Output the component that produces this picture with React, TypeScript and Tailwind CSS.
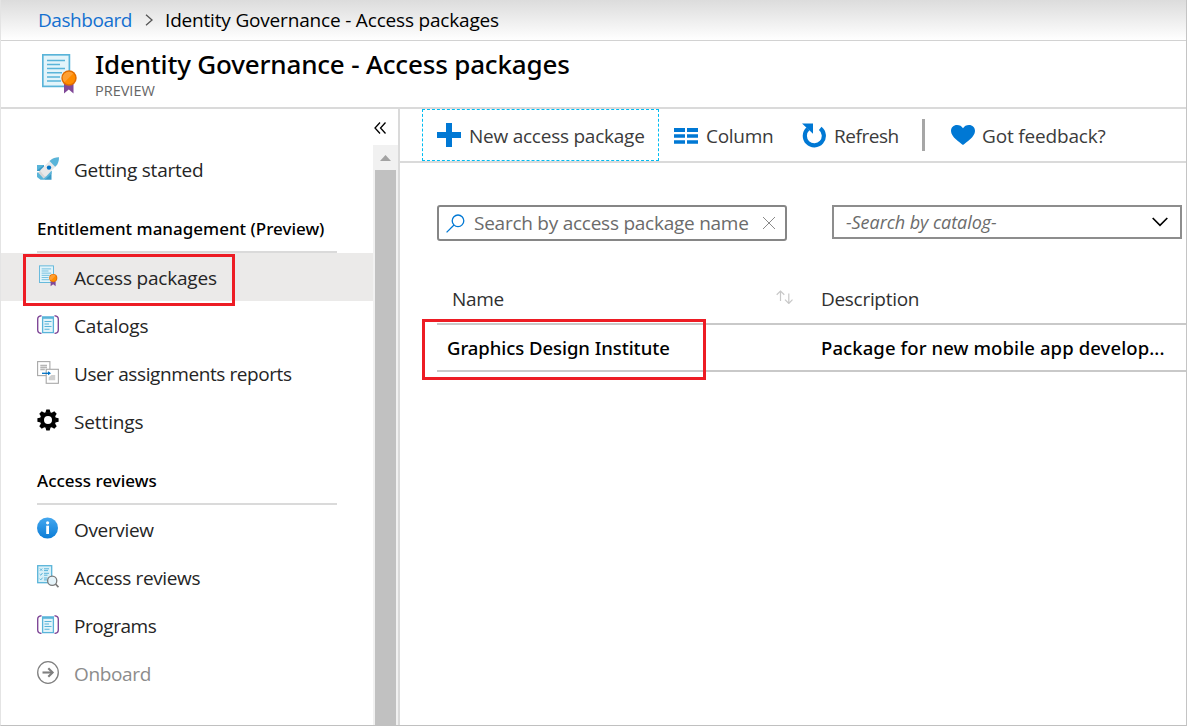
import type { ReactNode } from "react";

function PackageIcon({ className }: { className: string }) {
  return (
    <svg viewBox="0 0 36 40" className={className}>
      <rect x="0.8" y="0.8" width="26.6" height="31.6" fill="#e3f4fa" stroke="#59b4d9" strokeWidth="1.7" />
      <path d="M5 6.5h18M5 10.5h13M5 14.6h18M5 18.8h15M5 22.9h13M5 27h14" stroke="#59b4d9" strokeWidth="1.5" />
      <path d="M22 30h9.5v9.6l-4.7-4-4.8 4z" fill="#804998" />
      <circle cx="27" cy="24" r="7.7" fill="#e06c00" />
      <circle cx="27" cy="24" r="6.2" fill="#ff8c00" />
      <path d="M22.5 28.3a6.2 6.2 0 0 1 8.8-8.8z" fill="#ffa033" />
    </svg>
  );
}

function RocketIcon() {
  return (
    <svg viewBox="0 0 22 23" className="h-[23px] w-[22px]">
      <path d="M0 8h7v6H0zM8 22.8h6.500V14H8z" fill="#3999c6" />
      <path d="M0 8h7l-7 5.500zM8 22.800l6.500-6V14H8z" fill="#59b4d9" />
      <path d="M0 15.500h4l4 4.500v2.800H3.500L0 20z" fill="#59b4d9" />
      <path d="M22 .2l-7.200 1.600L3 13.600 8.600 20 20.400 7.600z" fill="#e8e8e8" />
      <path d="M22 .2c-3.500 0-6.500.6-9.500 3.900l5.700 5.700C21.300 7 22 3.800 22 .2z" fill="#59b4d9" />
      <path d="M3 13.600L8.600 20l-2 1.500-5.300-5.800z" fill="#d6d6d6" />
      <circle cx="12" cy="10.600" r="2.200" fill="#0072c6" />
    </svg>
  );
}

function CatalogIcon() {
  return (
    <svg viewBox="0 0 22 19" className="h-[19px] w-[22px]">
      <path d="M4.5.7C2.3.9.7 2 .7 4v11c0 2 1.600 3.200 3.800 3.400M17.500.7c2.200.2 3.800 1.300 3.800 3.300v11c0 2-1.600 3.200-3.800 3.400" fill="none" stroke="#804998" strokeWidth="1.4" />
      <rect x="5.600" y="2.200" width="10.800" height="15.400" fill="#e3f4fa" stroke="#59b4d9" strokeWidth="1.300" />
      <path d="M5 1.400h12v2.400H5z" fill="#59b4d9" />
      <path d="M7.500 6.500h7M7.500 9h4.500M7.500 11.500h7M7.500 14.300h5" stroke="#59b4d9" strokeWidth="1.100" />
    </svg>
  );
}

function ReportsIcon() {
  return (
    <svg viewBox="0 0 22 24" className="h-[24px] w-[22px]">
      <rect x=".6" y="1.600" width="12.300" height="14" fill="#fff" stroke="#a8a8a8" strokeWidth="1.100" />
      <path d="M3.300 5.500h6.700M3.300 7.500h6.700M3.300 9.500h4.500" stroke="#b5b5b5" strokeWidth="1.400" />
      <rect x="9.200" y="9.300" width="12.200" height="14" fill="#fff" stroke="#a8a8a8" strokeWidth="1.100" />
      <path d="M14.500 15h3.700v5.300h-6.500v-3z" fill="#d0d0d0" />
      <path d="M5 13.300h8" stroke="#0072c6" strokeWidth="1.300" />
      <path d="M11 11.300l3 2-3 2z" fill="#0072c6" />
    </svg>
  );
}

function GearIcon() {
  const angles = [0, 45, 90, 135, 180, 225, 270, 315];
  return (
    <svg viewBox="-11 -11 22 22" className="size-[22px]">
      {angles.map((a) => (
        <path key={a} transform={`rotate(${a})`} d="M-2.6-7.2L-1.7-10.6h3.400L2.600-7.200z" fill="#000" />
      ))}
      <circle r="6" fill="none" stroke="#000" strokeWidth="4" />
    </svg>
  );
}

function InfoIcon() {
  return (
    <svg viewBox="0 0 22 22" className="size-[22px]">
      <defs>
        <linearGradient id="info" x1="0" y1="0" x2="0" y2="1">
          <stop offset="0" stopColor="#45a8ef" />
          <stop offset="1" stopColor="#0b7cd6" />
        </linearGradient>
      </defs>
      <circle cx="10.500" cy="11" r="10.500" fill="url(#info)" />
      <path d="M9.200 8.700h2.800v8.300H9.200z" fill="#fff" />
      <circle cx="10.600" cy="5.800" r="1.600" fill="#fff" />
    </svg>
  );
}

function ReviewIcon() {
  return (
    <svg viewBox="0 0 22 23" className="h-[23px] w-[22px]">
      <rect x=".7" y=".7" width="14" height="17" fill="#d9f0f8" stroke="#59b4d9" strokeWidth="1.300" />
      <path d="M7 3.800h5M7 5.600h4M7 8.300h5M7 10.200h3.500M7 13h3.500M7 14.900h3M3 3.500l2.200 2.200M5.200 3.500L3 5.700M2.600 9l1.200 1.200L5.500 8M2.600 13.700l1.200 1.200 1.700-2.200" fill="none" stroke="#59b4d9" strokeWidth="1" />
      <circle cx="15.200" cy="15.700" r="4.600" fill="#e6f4fa" stroke="#7a7a7a" strokeWidth="1.300" />
      <path d="M18.500 19l3 3.200" stroke="#7a7a7a" strokeWidth="1.800" />
    </svg>
  );
}

function OnboardIcon() {
  return (
    <svg viewBox="0 0 22 23" className="h-[23px] w-[22px]" fill="none" stroke="#7f7f7f">
      <ellipse cx="11" cy="11.500" rx="10.300" ry="10.800" strokeWidth="1.300" />
      <path d="M5.500 11.500h10" strokeWidth="2.100" />
      <path d="M11.300 7.300l4.300 4.200-4.300 4.200" strokeWidth="2.100" />
    </svg>
  );
}

function NavItem({ icon, label, className = "" }: { icon: ReactNode; label: string; className?: string }) {
  return (
    <div className="flex h-12 items-center pt-[2px] pl-9">
      <div className="mb-1 flex w-[37px] items-center">{icon}</div>
      <span className={`text-[19px] leading-none ${className}`}>{label}</span>
    </div>
  );
}

function GroupHeading({ children }: { children: ReactNode }) {
  return (
    <div className="mr-9 ml-9 flex h-[60px] items-end border-b-2 border-[#dadada] pb-[13px] font-['Noto_Sans',sans-serif] text-[17px] leading-[18px] font-medium text-black">
      {children}
    </div>
  );
}

function Sidebar() {
  return (
    <aside className="flex w-[399px] shrink-0 border-r-2 border-[#dadada]">
      <nav className="w-[372px] shrink-0 pt-[36px] text-[#252525]">
        <NavItem icon={<RocketIcon />} label="Getting started" className="tracking-[-0.24px]" />
        <GroupHeading>Entitlement management (Preview)</GroupHeading>
        <div className="relative bg-[#ebeae9]">
          <NavItem icon={<PackageIcon className="ml-[2px] h-[22px] w-[19px]" />} label="Access packages" className="tracking-[-0.2px]" />
          <div className="absolute top-px left-[22px] h-[52px] w-[212px] border-3 border-[#ed1c24]" />
        </div>
        <NavItem icon={<CatalogIcon />} label="Catalogs" className="tracking-[-0.12px]" />
        <NavItem icon={<ReportsIcon />} label="User assignments reports" className="tracking-[-0.41px]" />
        <NavItem icon={<GearIcon />} label="Settings" className="tracking-[-0.12px]" />
        <GroupHeading>Access reviews</GroupHeading>
        <NavItem icon={<InfoIcon />} label="Overview" className="tracking-[-0.35px]" />
        <NavItem icon={<ReviewIcon />} label="Access reviews" className="tracking-[-0.35px]" />
        <NavItem icon={<CatalogIcon />} label="Programs" className="tracking-[-0.45px]" />
        <NavItem icon={<OnboardIcon />} label="Onboard" className="tracking-[-0.35px] text-[#8c8c8c]" />
      </nav>
      <div className="flex flex-1 flex-col">
        <button className="flex h-9 items-center" aria-label="Collapse">
          <svg viewBox="0 0 12 12" className="mt-px ml-px size-3" fill="none" stroke="#000" strokeWidth="1.300">
            <path d="M6 .5L1 6l5 5.500M11.500.5l-5 5.500 5 5.500" />
          </svg>
        </button>
        <div className="flex flex-1 flex-col bg-[#f1f1f1] px-[2px]">
          <svg viewBox="0 0 21 25" className="h-[25px] w-[21px]">
            <path d="M5 16l5.500-6 5.500 6z" fill="#a3a3a3" />
          </svg>
          <div className="w-[21px] flex-1 bg-[#c1c1c1]" />
        </div>
      </div>
    </aside>
  );
}

function Toolbar() {
  return (
    <div className="flex h-[54px] items-start border-b-2 border-[#dadada] pl-[22px] text-[19px] leading-none text-[#3b3b3b]">
      <div className="flex h-[52px] w-[237px] items-center border border-dashed border-[#00bcf2] pl-[14px]">
        <svg viewBox="0 0 24 24" className="size-6 shrink-0">
          <path d="M9 0h6v9h9v6h-9v9H9v-9H0V9h9z" fill="#0078d4" />
        </svg>
        <span className="ml-[8px] pt-[2px] tracking-[-0.24px] whitespace-nowrap">New access package</span>
      </div>
      <div className="flex h-[52px] items-center pl-[15px]">
        <svg viewBox="0 0 24 16" className="mt-px h-4 w-6">
          <path d="M0 0h11v4H0zM13 0h11v4H13zM0 6.300h11v3.500H0zM13 6.300h11v3.500H13zM0 12.200h11v3.500H0zM13 12.200h11v3.500H13z" fill="#0078d4" />
        </svg>
        <span className="ml-[8px] w-[96px] pt-[2px] tracking-[-0.3px]">Column</span>
        <svg viewBox="0 0 24 25" className="h-[25px] w-6">
          <path d="M6 5.800A9.500 9.500 0 1 0 18.200 5.400" fill="none" stroke="#0078d4" strokeWidth="4.200" />
          <path d="M0 .5h11v10.300z" fill="#0078d4" />
        </svg>
        <span className="ml-[8px] w-[88px] pt-[2px] tracking-[-0.45px]">Refresh</span>
        <div className="h-8 w-[3px] bg-[#a6a6a6]" />
        <svg viewBox="0 0 24 20" className="ml-[26px] h-5 w-6">
          <path d="M12 20C9 17.500 0 12 0 6 0 2.500 2.500 0 6 0c2.600 0 4.800 1.200 6 3.300C13.200 1.200 15.400 0 18 0c3.500 0 6 2.500 6 6 0 6-9 11.500-12 14z" fill="#0078d4" />
        </svg>
        <span className="ml-[7px] pt-[2px] tracking-[-0.17px]">Got feedback?</span>
      </div>
    </div>
  );
}

function Filters() {
  return (
    <div className="flex items-start pt-[42px] pl-[37px] text-[#6b6b6b]">
      <div className="flex h-9 w-[350px] items-center rounded-[3px] border-2 border-[#868686] pl-[7px]">
        <svg viewBox="0 0 19 19" className="size-[19px]" fill="none" stroke="#0078d4" strokeWidth="1.300">
          <circle cx="12" cy="6.800" r="5.800" />
          <path d="M8 11L.6 18.400" />
        </svg>
        <span className="ml-[9px] w-[287px] text-[19px] leading-none tracking-[-0.25px] whitespace-nowrap">Search by access package name</span>
        <svg viewBox="0 0 12 12" className="ml-[2px] size-3" stroke="#8a8a8a">
          <path d="M0 0l12 12M12 0L0 12" />
        </svg>
      </div>
      <div className="ml-[45px] flex h-[34px] w-[350px] items-center justify-between border-2 border-[#8d8d8d] pr-[12px] pl-[12px]">
        <span className="text-[18px] leading-none tracking-[-0.05px] italic">-Search by catalog-</span>
        <svg viewBox="0 0 16 10" className="h-[10px] w-4" fill="none" stroke="#000" strokeWidth="1.700">
          <path d="M.7 1l7.300 7.300L15.300 1" />
        </svg>
      </div>
    </div>
  );
}

function PackageTable() {
  return (
    <div className="relative mt-[34px] ml-[37px]">
      <div className="flex h-[48px] items-center pl-[15px] text-[19px] leading-none text-[#303030]">
        <span className="w-[324px] tracking-[-0.3px]">Name</span>
        <svg viewBox="0 0 17 14" className="mr-[28px] -mt-[5px] h-[14px] w-[17px]" fill="none" stroke="#c8c8c8" strokeWidth="1.200">
          <path d="M4.500 11V1M.7 4.700L4.500 1l3.800 3.700M12.800 3.500v10M9 9.700l3.800 3.800 3.700-3.800" />
        </svg>
        <span className="tracking-[-0.3px]">Description</span>
      </div>
      <div className="flex h-[49px] items-center border-y-2 border-[#c9c9c9] pt-px pl-[10px] font-['Noto_Sans',sans-serif] text-[18.5px] leading-none font-medium text-black">
        <span className="w-[374px] tracking-[-0.05px]">Graphics Design Institute</span>
        <span className="tracking-[0.1px]">Package for new mobile app develop...</span>
      </div>
      <div className="absolute top-[44px] -left-[15px] h-[61px] w-[284px] border-3 border-[#ed1c24]" />
    </div>
  );
}

export default function App() {
  return (
    <div className="flex h-[726px] w-[1187px] flex-col overflow-hidden border-x border-b border-l-[#e4e4e4] border-r-[#c4c4c4] border-b-[#c0c0c0] bg-white font-['Open_Sans',sans-serif]">
      <div className="flex h-[41px] shrink-0 items-center border-b border-[#d2d2d2] bg-linear-to-b from-[#dcdcdc] to-white pl-[37px] text-[19px] leading-none text-black">
        <span className="w-[107px] tracking-[-0.45px] text-[#1470d0]">Dashboard</span>
        <svg viewBox="0 0 8 12" className="h-3 w-2" fill="none" stroke="#555" strokeWidth="1.300">
          <path d="M1 .7L7 6l-6 5.300" />
        </svg>
        <span className="ml-[12px] tracking-[-0.18px]">Identity Governance - Access packages</span>
      </div>
      <header className="flex h-[68px] shrink-0 border-b-2 border-[#dadada] pl-[41px]">
        <PackageIcon className="mt-[13px] h-[40px] w-9" />
        <div className="ml-[17px] pt-[7px]">
          <h1 className="font-['Noto_Sans',sans-serif] text-[26px] leading-[32px] font-medium tracking-[-0.18px] text-black">Identity Governance - Access packages</h1>
          <div className="mt-[2px] text-[14.5px] leading-[17px] text-[#666]">PREVIEW</div>
        </div>
      </header>
      <div className="flex min-h-0 flex-1">
        <Sidebar />
        <main className="min-w-0 flex-1">
          <Toolbar />
          <Filters />
          <PackageTable />
        </main>
      </div>
    </div>
  );
}
